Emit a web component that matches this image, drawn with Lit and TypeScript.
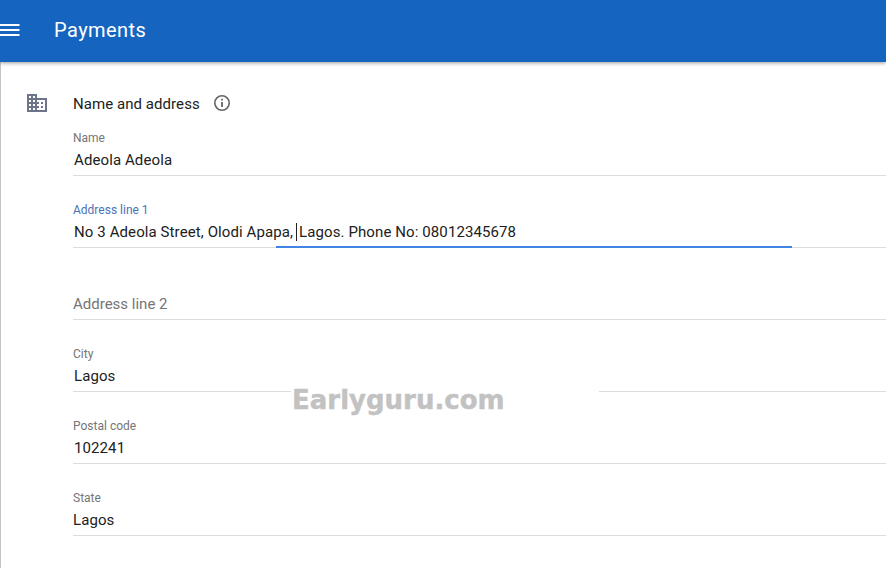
import { LitElement, html, css } from "lit";
import { customElement } from "lit/decorators.js";

@customElement("app-root")
export class AppRoot extends LitElement {
  static styles = css`
    :host { display: block; width: 886px; height: 568px; position: relative; overflow: hidden; background: #fff; font-family: Roboto, "Liberation Sans", sans-serif; color: #212121; }
    .bar { height: 62px; box-sizing: border-box; padding-bottom: 2px; background: #1565c0; box-shadow: 0 1px 4px rgba(0,0,0,.4); display: flex; align-items: center; position: relative; z-index: 1; }
    .menu { width: 20px; height: 14px; display: block; }
    .title { margin-left: 34px; color: #fff; font-size: 20px; font-weight: 400; letter-spacing: .45px; }
    .body { height: 506px; border-left: 1px solid #c4c4c4; box-sizing: border-box; display: flex; padding-left: 26px; }
    .building { width: 20px; height: 18px; margin-top: 32px; flex: none; }
    .main { flex: 1; margin-left: 26px; min-width: 0; }
    .head { display: flex; align-items: center; height: 20px; margin-top: 32px; font-size: 15px; letter-spacing: .06px; }
    .info { width: 18px; height: 18px; margin-left: 13px; margin-bottom: 2px; }
    .field { height: 72px; box-sizing: border-box; border-bottom: 1px solid #dcdcdc; position: relative; display: flex; flex-direction: column; justify-content: flex-end; padding-bottom: 5px; }
    .first { height: 62px; }
    .label { font-size: 12px; line-height: 14px; color: #757575; margin-bottom: 5px; }
    .focus { color: #4a72b8; }
    .value { font-size: 15px; line-height: 20px; padding-left: 1px; letter-spacing: .1px; }
    .flush { padding-left: 0; }
    .placeholder { font-size: 15px; line-height: 20px; color: #757575; }
    .caret { display: inline-block; width: 1px; height: 18px; background: #212121; vertical-align: -4px; margin: 0 2px 0 3px; }
    .active { position: absolute; left: 203px; width: 516px; height: 2px; bottom: -1px; background: #4285e4; }
    .mark { position: absolute; left: 291px; top: 385px; width: 308px; height: 30px; background: #fff; color: #c2c2c2; font-family: "DejaVu Sans", sans-serif; font-weight: 700; font-size: 26px; line-height: 30px; white-space: nowrap; padding-left: 1px; box-sizing: border-box; -webkit-text-stroke: .4px #c2c2c2; }
  `;

  render() {
    return html`
      <div class="bar">
        <svg class="menu" viewBox="0 0 20 14"><path d="M0 1h19.5v2H0zM0 6h19.5v2H0zM0 11h19.5v2H0z" fill="#fff"/></svg>
        <div class="title">Payments</div>
      </div>
      <div class="body">
        <svg class="building" viewBox="0 0 20 18">
          <path fill="#6b7488" fill-rule="evenodd" d="M0 0h10v4h10v14H0zM2 2v2h2V2zM6 2v2h2V2zM2 6v2h2V6zM6 6v2h2V6zM2 10v2h2v-2zM6 10v2h2v-2zM2 14v2h2v-2zM6 14v2h2v-2zM10 6v2h2v2h-2v2h2v2h-2v2h8V6zM14 8h2v2h-2zM14 12h2v2h-2z"/>
        </svg>
        <div class="main">
          <div class="head">
            <span>Name and address</span>
            <svg class="info" viewBox="0 0 18 18">
              <circle cx="9" cy="9" r="7.2" fill="none" stroke="#666" stroke-width="1.6"/>
              <path d="M8.1 8h1.8v5H8.1zM8.1 4.8h1.8v1.8H8.1z" fill="#666"/>
            </svg>
          </div>
          <div class="fields">
            <div class="field first"><div class="label">Name</div><div class="value">Adeola Adeola</div></div>
            <div class="field"><div class="label focus">Address line 1</div><div class="value">No 3 Adeola Street, Olodi Apapa,<span class="caret"></span>Lagos. Phone No: 08012345678</div><div class="active"></div></div>
            <div class="field"><div class="placeholder">Address line 2</div></div>
            <div class="field"><div class="label">City</div><div class="value">Lagos</div></div>
            <div class="field"><div class="label">Postal code</div><div class="value">102241</div></div>
            <div class="field"><div class="label">State</div><div class="value flush">Lagos</div></div>
          </div>
        </div>
      </div>
      <div class="mark">Earlyguru.com</div>
    `;
  }
}
